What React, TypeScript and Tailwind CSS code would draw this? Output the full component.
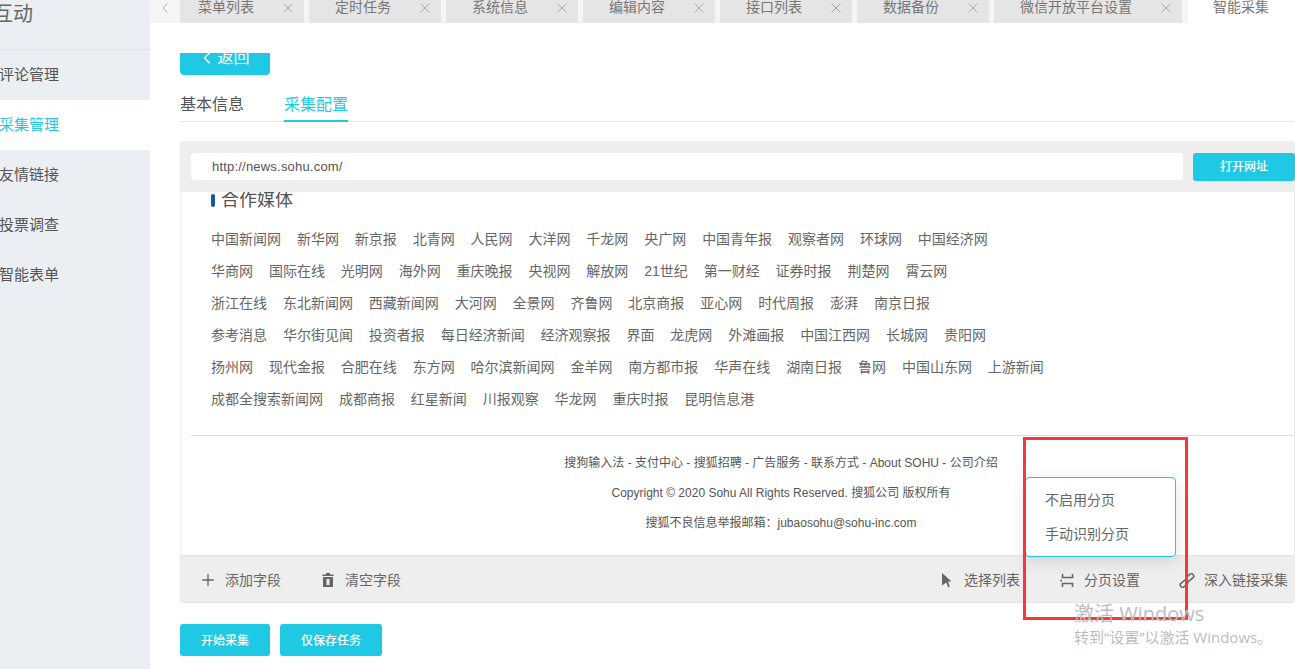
import React from 'react';
import { ChevronLeft, Plus, X } from 'lucide-react';

const font = { fontFamily: '"Liberation Sans", "Noto Sans CJK SC", sans-serif' };

const tabs = [
  { label: '菜单列表', className: 'w-[124px] pl-[18px]' },
  { label: '定时任务', className: 'w-[132px] pl-[26px]' },
  { label: '系统信息', className: 'w-[132px] pl-[26px]' },
  { label: '编辑内容', className: 'w-[132px] pl-[26px]' },
  { label: '接口列表', className: 'w-[132px] pl-[26px]' },
  { label: '数据备份', className: 'w-[132px] pl-[26px]' },
  { label: '微信开放平台设置', className: 'w-[188px] pl-[26px]' },
];

const menu = ['评论管理', '采集管理', '友情链接', '投票调查', '智能表单'];

const media = [
  ['中国新闻网', '新华网', '新京报', '北青网', '人民网', '大洋网', '千龙网', '央广网', '中国青年报', '观察者网', '环球网', '中国经济网'],
  ['华商网', '国际在线', '光明网', '海外网', '重庆晚报', '央视网', '解放网', '21世纪', '第一财经', '证券时报', '荆楚网', '霄云网'],
  ['浙江在线', '东北新闻网', '西藏新闻网', '大河网', '全景网', '齐鲁网', '北京商报', '亚心网', '时代周报', '澎湃', '南京日报'],
  ['参考消息', '华尔街见闻', '投资者报', '每日经济新闻', '经济观察报', '界面', '龙虎网', '外滩画报', '中国江西网', '长城网', '贵阳网'],
  ['扬州网', '现代金报', '合肥在线', '东方网', '哈尔滨新闻网', '金羊网', '南方都市报', '华声在线', '湖南日报', '鲁网', '中国山东网', '上游新闻'],
  ['成都全搜索新闻网', '成都商报', '红星新闻', '川报观察', '华龙网', '重庆时报', '昆明信息港'],
];

function TrashIcon() {
  return (
    <svg width="12" height="14" viewBox="0 0 12 14" fill="#666">
      <path d="M4 0h4v1.500h3.500V3H.5V1.500H4z" />
      <path fillRule="evenodd" d="M1 4h10v10H1zM4.500 6v6h3V6z" />
    </svg>
  );
}

function CursorIcon() {
  return (
    <svg width="10" height="15" viewBox="0 0 10 15" fill="#666">
      <path d="M0 0l9.500 8.600H6l1.800 5.200-1.600.8-2-5.200L0 12.500z" />
    </svg>
  );
}

function PageIcon() {
  return (
    <svg width="15" height="13" viewBox="0 0 15 13" fill="none" stroke="#666" strokeWidth="1.600">
      <path d="M2.500 0v3.500h11M12.500 0v3.500M2.500 13V9.500h11M12.500 13V9.500" />
      <path d="M0 6.500l1.500-1v2z" fill="#666" strokeWidth="0.500" />
    </svg>
  );
}

function LinkIcon() {
  return (
    <svg width="16" height="15" viewBox="0 0 16 15" fill="none" stroke="#666" strokeWidth="1.500">
      <rect x="7" y="2" width="8" height="4.500" rx="1.500" transform="rotate(-40 11 4.250)" />
      <rect x="1" y="8.500" width="8" height="4.500" rx="1.500" transform="rotate(-40 5 10.750)" />
    </svg>
  );
}

function ToolItem({ icon, label, className }: { icon: React.ReactNode; label: string; className: string }) {
  return (
    <div className={`flex items-center ${className}`}>
      <span className="flex w-[16px] justify-center">{icon}</span>
      <span className="ml-[9px] whitespace-nowrap">{label}</span>
    </div>
  );
}

export default function App() {
  return (
    <div className="relative flex h-[669px] w-[1295px] overflow-hidden bg-white text-[14px] text-[#666]" style={font}>
      {/* sidebar */}
      <aside className="h-full w-[150px] shrink-0 overflow-hidden bg-[#ebeef2]">
        <div className="flex h-[50px] items-start border-b border-[#dfe2e6] pt-[1px]">
          <span className="-ml-[7px] text-[20px] leading-[26px] text-[#666]">互动</span>
        </div>
        {menu.map((item) => (
          <div
            key={item}
            className={`flex h-[50px] items-center ${item === '采集管理' ? 'bg-white text-[#1fc8e3]' : 'text-[#555]'}`}
          >
            <span className="-ml-[1px] text-[15px]">{item}</span>
          </div>
        ))}
      </aside>

      <main className="flex min-w-0 flex-1 flex-col">
        {/* tab bar */}
        <div className="flex h-[23px] shrink-0 bg-[#f5f5f5]">
          <div className="flex w-[30px] items-start justify-center">
            <ChevronLeft size={16} strokeWidth={1} className="text-[#888]" />
          </div>
          <div className="flex gap-[5px]">
            {tabs.map((tab) => (
              <div key={tab.label} className={`flex h-[23px] items-start justify-between bg-[#e5e5e5] pr-[8px] ${tab.className}`}>
                <span className="-mt-[4px] whitespace-nowrap leading-[22px] text-[#777]">{tab.label}</span>
                <X size={16} strokeWidth={1} className="text-[#888]" />
              </div>
            ))}
          </div>
          <div className="ml-[6px] flex-1 bg-white pl-[25px]">
            <span className="-mt-[4px] block whitespace-nowrap leading-[22px] text-[#777]">智能采集</span>
          </div>
        </div>

        {/* scroll area */}
        <div className="mt-[30px] min-h-0 flex-1 overflow-hidden pl-[30px]">
          <button className="-mt-[14px] flex h-[36px] w-[90px] items-center justify-center rounded-[4px] bg-[#1fc8e3] pt-[1px] text-[16px] text-white">
            <ChevronLeft size={20} strokeWidth={1.500} className="-ml-[3px]" />
            <span>返回</span>
          </button>

          <div className="mt-[13px] flex h-[34px] border-b border-[#e6e6e6] text-[16px] leading-[34px]">
            <span className="text-[#555]">基本信息</span>
            <span className="ml-[40px] h-[34px] border-b-2 border-[#1fc8e3] text-[#1fc8e3]">采集配置</span>
          </div>

          {/* collect panel */}
          <div className="mt-[19px] w-[1115px] rounded-[4px] border-b border-[#e4e4e4] bg-[#eeeeee]">
            <div className="flex h-[51px] items-center pl-[11px]">
              <div className="flex h-[27px] w-[992px] shrink-0 items-center rounded-[4px] bg-white pl-[21px] text-[13px] tracking-[0.2px] text-[#555]">
                http://news.sohu.com/
              </div>
              <button className="ml-[10px] h-[28px] w-[102px] shrink-0 rounded-[3px] bg-[#1fc8e3] text-[12px] font-medium text-white">
                打开网址
              </button>
            </div>

            <div className="mx-[1px] h-[363px] overflow-hidden bg-white pl-[10px]">
              <div className="flex h-[16px] items-center pl-[20px]">
                <span className="mr-[7px] h-[13px] w-[4px] rounded-[2px] bg-[#0f57a8]" />
                <span className="mt-[1px] -ml-[1px] text-[18px] text-[#555]">合作媒体</span>
              </div>
              <div className="mt-[15px] pl-[20px]">
                {media.map((row, i) => (
                  <div key={i} className="flex h-[32px] items-center gap-[15.900px] whitespace-nowrap">
                    {row.map((name) => (
                      <span key={name}>{name}</span>
                    ))}
                  </div>
                ))}
              </div>
              <div className="mt-[20px] w-[1180px] border-t border-[#dddddd] pt-[12px] text-center text-[12px] leading-[30px] text-[#555]">
                <p>搜狗输入法 - 支付中心 - 搜狐招聘 - 广告服务 - 联系方式 - About SOHU - 公司介绍</p>
                <p>Copyright © 2020 Sohu All Rights Reserved. 搜狐公司 版权所有</p>
                <p>搜狐不良信息举报邮箱：jubaosohu@sohu-inc.com</p>
              </div>
            </div>

            <div className="flex h-[47px] items-center border-t border-[#e4e4e4] pl-[20px] pt-[2px]">
              <ToolItem icon={<Plus size={18} strokeWidth={1.800} className="shrink-0 text-[#666]" />} label="添加字段" className="" />
              <ToolItem icon={<TrashIcon />} label="清空字段" className="ml-[39px]" />
              <ToolItem icon={<CursorIcon />} label="选择列表" className="ml-[538px]" />
              <ToolItem icon={<PageIcon />} label="分页设置" className="ml-[39px]" />
              <ToolItem icon={<LinkIcon />} label="深入链接采集" className="ml-[39px]" />
            </div>
          </div>

          <div className="mt-[21px] flex gap-[10px]">
            <button className="h-[32px] w-[90px] rounded-[3px] bg-[#1fc8e3] pt-[1px] text-[12px] font-medium text-white">开始采集</button>
            <button className="h-[32px] w-[102px] rounded-[3px] bg-[#1fc8e3] pt-[1px] text-[12px] font-medium text-white">仅保存任务</button>
          </div>
        </div>
      </main>

      {/* pagination popup */}
      <div className="absolute left-[1025px] top-[477px] h-[80px] w-[151px] rounded-[4px] border border-[#1fc8e3] bg-white pl-[19px] pt-[5px] leading-[34px] shadow-[0_4px_16px_rgba(0,0,0,0.12)]">
        <div>不启用分页</div>
        <div>手动识别分页</div>
      </div>

      {/* annotation */}
      <div className="pointer-events-none absolute left-[1023px] top-[437px] h-[183px] w-[165px] border-[3px] border-[#f83838]" />

      {/* watermark */}
      <div className="pointer-events-none absolute left-[1074px] top-[600px] text-[#bdbdbd]" style={{ fontFamily: '"Open Sans", "Noto Sans CJK SC", sans-serif' }}>
        <div className="text-[20px] leading-[28px]">激活 Windows</div>
        <div className="-mt-[1px] text-[15px] leading-[20px]">转到“设置”以激活 Windows。</div>
      </div>
    </div>
  );
}
